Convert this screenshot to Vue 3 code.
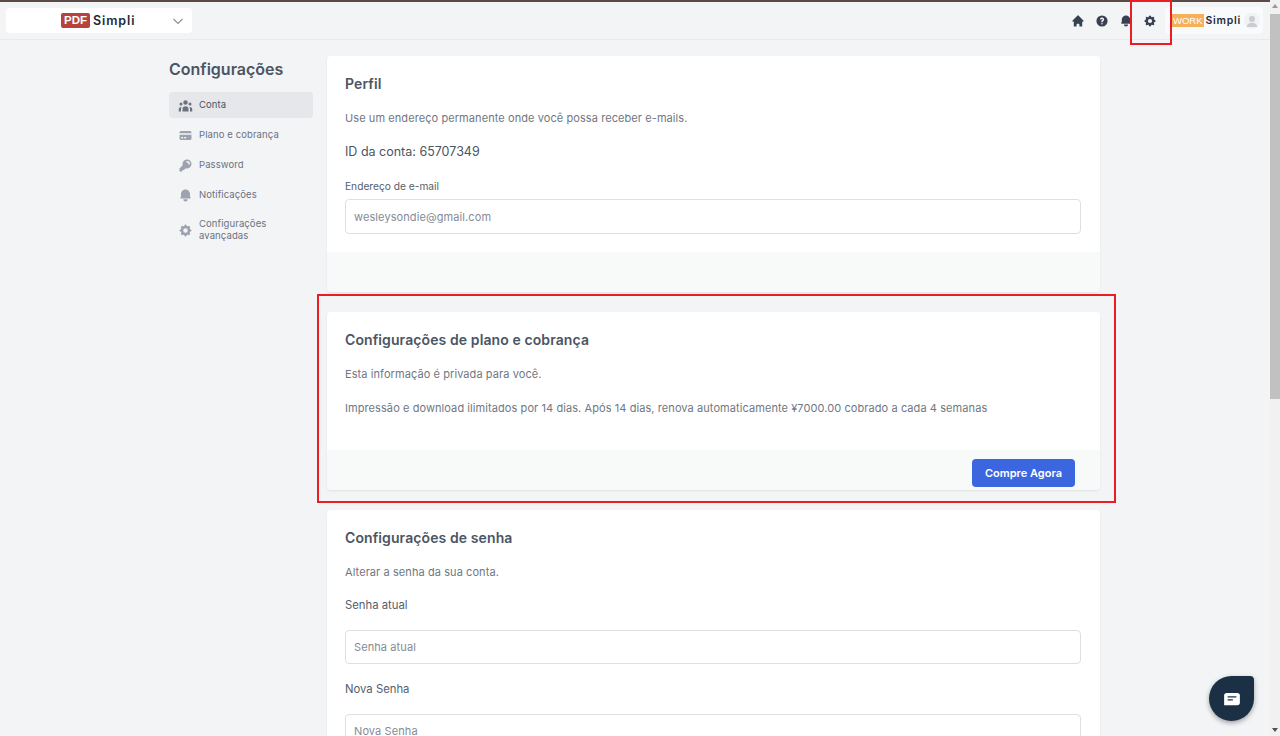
<template>
  <div class="page">
    <div class="view">
      <!-- Top bar -->
      <header class="topbar">
        <div class="app-switch">
          <span class="logo-pdf">PDF</span><span class="logo-name">Simpli</span>
          <svg class="chev" viewBox="0 0 12 12"><path d="M1.500 4l4.500 4.500L10.500 4" fill="none" stroke="#8a909b" stroke-width="1.100"/></svg>
        </div>
        <div class="top-icons">
          <svg class="ti" viewBox="0 0 20 20"><path :d="icons.home"/></svg>
          <svg class="ti" viewBox="0 0 20 20"><path fill-rule="evenodd" clip-rule="evenodd" :d="icons.help"/></svg>
          <svg class="ti" viewBox="0 0 20 20"><path :d="icons.bell"/></svg>
          <svg class="ti" viewBox="0 0 20 20"><path fill-rule="evenodd" clip-rule="evenodd" :d="icons.cog"/></svg>
        </div>
        <div class="user-chip">
          <span class="logo-work">WORK</span><span class="logo-name small">Simpli</span>
          <span class="avatar">
            <svg viewBox="0 0 16 16"><circle cx="8" cy="6" r="3" fill="#c9ccd1"/><path d="M2.500 14c.6-3 2.800-4.300 5.500-4.300s4.900 1.300 5.500 4.300z" fill="#c9ccd1"/></svg>
          </span>
        </div>
      </header>

      <div class="content">
        <!-- Side menu -->
        <aside class="side">
          <h2 class="side-title">Configurações</h2>
          <nav class="side-nav">
            <a v-for="item in menu" :key="item.label" class="side-item" :class="{ active: item.active }">
              <svg class="side-icon" viewBox="0 0 20 20"><path v-for="d in item.paths" :key="d" fill-rule="evenodd" clip-rule="evenodd" :d="d"/></svg>
              <span>{{ item.label }}</span>
            </a>
          </nav>
        </aside>

        <main class="cards">
          <section class="card">
            <div class="card-body perfil">
              <h3>Perfil</h3>
              <p class="muted">Use um endereço permanente onde você possa receber e-mails.</p>
              <p class="account">ID da conta: 65707349</p>
              <label class="field-label">Endereço de e-mail</label>
              <div class="input">wesleysondie@gmail.com</div>
            </div>
            <div class="card-foot"></div>
          </section>

          <section class="card">
            <div class="card-body plano">
              <h3>Configurações de plano e cobrança</h3>
              <p class="muted">Esta informação é privada para você.</p>
              <p class="muted plan-line">Impressão e download ilimitados por 14 dias. Após 14 dias, renova automaticamente ¥7000.00 cobrado a cada 4 semanas</p>
            </div>
            <div class="card-foot">
              <button class="btn-buy">Compre Agora</button>
            </div>
          </section>

          <section class="card">
            <div class="card-body senha">
              <h3>Configurações de senha</h3>
              <p class="muted">Alterar a senha da sua conta.</p>
              <label class="field-label first">Senha atual</label>
              <div class="input">Senha atual</div>
              <label class="field-label second">Nova Senha</label>
              <div class="input">Nova Senha</div>
            </div>
          </section>
        </main>
      </div>
    </div>

    <!-- Scrollbar -->
    <div class="scrollbar">
      <span class="arrow up"></span>
      <span class="thumb"></span>
      <span class="arrow down"></span>
    </div>

    <!-- Annotation boxes and chat bubble sit on top of the page -->
    <div class="mark mark-gear"></div>
    <div class="mark mark-plan"></div>
    <div class="chat">
      <svg viewBox="0 0 20 16"><path d="M4 1h12a3 3 0 0 1 3 3v8a3 3 0 0 1-3 3H1V4a3 3 0 0 1 3-3z" fill="#fff"/><path d="M5 5.500h10M5 9h6" stroke="#1f3247" stroke-width="1.400"/></svg>
    </div>
  </div>
</template>

<script setup>
const icons = {
  home: 'M10.707 2.293a1 1 0 00-1.414 0l-7 7a1 1 0 001.414 1.414L4 10.414V17a1 1 0 001 1h2a1 1 0 001-1v-2a1 1 0 011-1h2a1 1 0 011 1v2a1 1 0 001 1h2a1 1 0 001-1v-6.586l.293.293a1 1 0 001.414-1.414l-7-7z',
  help: 'M18 10a8 8 0 11-16 0 8 8 0 0116 0zm-8-3a1 1 0 00-.867.5 1 1 0 11-1.731-1A3 3 0 0113 8a3.001 3.001 0 01-2 2.830V11a1 1 0 11-2 0v-1a1 1 0 011-1 1 1 0 100-2zm0 8a1 1 0 100-2 1 1 0 000 2z',
  bell: 'M10 2a6 6 0 00-6 6v3.586l-.707.707A1 1 0 004 14h12a1 1 0 00.707-1.707L16 11.586V8a6 6 0 00-6-6zM10 18a3 3 0 01-3-3h6a3 3 0 01-3 3z',
  cog: 'M11.490 3.170c-.38-1.560-2.600-1.560-2.980 0a1.532 1.532 0 01-2.286.948c-1.372-.836-2.942.734-2.106 2.106.54.886.061 2.042-.947 2.287-1.561.379-1.561 2.600 0 2.978a1.532 1.532 0 01.947 2.287c-.836 1.372.734 2.942 2.106 2.106a1.532 1.532 0 012.287.947c.379 1.561 2.600 1.561 2.978 0a1.533 1.533 0 012.287-.947c1.372.836 2.942-.734 2.106-2.106a1.533 1.533 0 01.947-2.287c1.561-.379 1.561-2.600 0-2.978a1.532 1.532 0 01-.947-2.287c.836-1.372-.734-2.942-2.106-2.106a1.532 1.532 0 01-2.287-.947zM10 13a3 3 0 100-6 3 3 0 000 6z',
}

const menu = [
  {
    label: 'Conta',
    active: true,
    paths: ['M13 6a3 3 0 11-6 0 3 3 0 016 0zM18 8a2 2 0 11-4 0 2 2 0 014 0zM14 15a4 4 0 00-8 0v3h8v-3zM6 8a2 2 0 11-4 0 2 2 0 014 0zM16 18v-3a5.972 5.972 0 00-.75-2.906A3.005 3.005 0 0119 15v3h-3zM4.750 12.094A5.973 5.973 0 004 15v3H1v-3a3 3 0 013.750-2.906z'],
  },
  {
    label: 'Plano e cobrança',
    paths: ['M4 4a2 2 0 00-2 2v1h16V6a2 2 0 00-2-2H4z', 'M18 9H2v5a2 2 0 002 2h12a2 2 0 002-2V9zM4 13a1 1 0 011-1h1a1 1 0 110 2H5a1 1 0 01-1-1zm5-1a1 1 0 100 2h1a1 1 0 100-2H9z'],
  },
  {
    label: 'Password',
    paths: ['M18 8a6 6 0 01-7.743 5.743L10 14l-1 1-1 1H6v2H2v-4l4.257-4.257A6 6 0 1118 8zm-6-4a1 1 0 100 2 2 2 0 012 2 1 1 0 102 0 4 4 0 00-4-4z'],
  },
  {
    label: 'Notificações',
    paths: [icons.bell],
  },
  {
    label: 'Configurações avançadas',
    paths: [icons.cog],
  },
]
</script>

<style>
html, body { margin: 0; overflow: hidden; }
</style>

<style scoped>
.page {
  position: relative;
  display: flex;
  height: 736px;
  overflow: hidden;
  background: #f3f4f6;
  font-family: Inter, "Liberation Sans", sans-serif;
  color: #4b5563;
}
.view { flex: 1; min-width: 0; }

/* Top bar */
.topbar {
  height: 37px;
  border-top: 2px solid #5b4a45;
  border-bottom: 1px solid #e9eaec;
  display: flex;
  align-items: center;
  padding-left: 6px;
  padding-right: 7px;
}
.app-switch {
  width: 186px;
  height: 25px;
  background: #fff;
  border-radius: 4px;
  display: flex;
  align-items: center;
  box-sizing: border-box;
  padding-left: 55px;
  padding-right: 8px;
}
.logo-pdf {
  background: #b8423c;
  color: #fff;
  font: 700 11.500px "Liberation Sans", sans-serif;
  line-height: 15px;
  padding: 0 3px;
  border-radius: 2px;
  margin-right: 3px;
}
.logo-name { font-weight: 600; font-size: 12.500px; color: #1f2937; letter-spacing: 0.9px; }
.logo-name.small { font-size: 10.500px; letter-spacing: 0.7px; }
.chev { width: 12px; height: 12px; margin-left: auto; }
.top-icons { margin-left: auto; display: flex; align-items: center; gap: 10px; margin-right: 8px; }
.ti { width: 14px; height: 14px; display: block; fill: #374151; }
.user-chip {
  width: 98px;
  height: 27px;
  box-sizing: border-box;
  background: #f9fafb;
  border-radius: 4px;
  display: flex;
  align-items: center;
  padding-left: 7px;
}
.logo-work {
  background: #f7b05a;
  color: #fff;
  font: 400 9.500px "Liberation Sans", sans-serif;
  line-height: 13px;
  padding: 0 1px;
  margin-right: 2px;
}
.avatar {
  width: 16px;
  height: 16px;
  border-radius: 50%;
  background: #f1f2f4;
  margin-left: auto;
  margin-right: 3px;
  overflow: hidden;
}
.avatar svg { display: block; width: 16px; height: 16px; }

/* Content */
.content {
  display: flex;
  gap: 14px;
  padding: 16px 0 0 169px;
}
.side { width: 144px; flex-shrink: 0; }
.side-title {
  margin: 4px 0 14px;
  font-size: 16px;
  line-height: 18px;
  font-weight: 600;
  color: #4b5563;
}
.side-nav { display: flex; flex-direction: column; gap: 4px; }
.side-item {
  min-height: 26px;
  border-radius: 4px;
  display: flex;
  align-items: center;
  gap: 6px;
  padding: 0 9px;
  font-size: 9.500px;
  line-height: 12px;
  letter-spacing: 0.1px;
  color: #6b7280;
}
.side-item.active { background: #e5e7eb; color: #4b5563; }
.side-icon { width: 15px; height: 15px; flex-shrink: 0; fill: #9ca3af; }
.side-item.active .side-icon { fill: #6b7280; }
.side-item:last-child { margin-top: 5px; padding-right: 30px; }

.cards { width: 773px; display: flex; flex-direction: column; gap: 20px; }
.card {
  background: #fff;
  border-radius: 4px;
  box-shadow: 0 1px 2px rgba(0, 0, 0, 0.08);
  overflow: hidden;
}
.card-body { padding: 19px 19px 0 18px; }
.card h3 { margin: 0; font-size: 14px; line-height: 17px; font-weight: 600; letter-spacing: 0.1px; color: #4b5563; }
.muted { margin: 0; font-size: 11px; line-height: 14px; letter-spacing: 0.08px; color: #707784; }
.perfil { height: 196px; box-sizing: border-box; }
.perfil .muted { margin-top: 19px; }
.account { margin: 19px 0 0; font-size: 12.500px; line-height: 16px; color: #4b5563; }
.field-label { display: block; font-size: 11.300px; line-height: 14px; color: #555e6c; }
.perfil .field-label { margin-top: 19px; font-size: 10.200px; }
.input {
  margin-top: 6px;
  height: 35px;
  box-sizing: border-box;
  border: 1px solid #dcdfe4;
  border-radius: 4px;
  padding: 0 8px;
  display: flex;
  align-items: center;
  font-size: 11px;
  letter-spacing: 0.1px;
  color: #858b95;
  background: #fff;
}
.card-foot {
  height: 40px;
  box-sizing: border-box;
  background: #f8f9f9;
  display: flex;
  align-items: flex-start;
  justify-content: flex-end;
  padding: 9px 25px 0 0;
}
.plano { height: 138px; box-sizing: border-box; }
.plano .muted { margin-top: 19px; }
.plano .plan-line { margin-top: 20px; }
.btn-buy {
  width: 103px;
  height: 28px;
  border: none;
  border-radius: 4px;
  background: #3b66e0;
  color: #fff;
  font: 600 11px Inter, sans-serif;
}
.senha { height: 300px; box-sizing: border-box; }
.senha .muted { margin-top: 19px; }
.field-label.first { margin-top: 19px; }
.field-label.second { margin-top: 18px; }
.senha .input { margin-top: 18px; height: 34px; }

/* Scrollbar */
.scrollbar {
  width: 10px;
  background: #f1f1f1;
  display: flex;
  flex-direction: column;
  align-items: center;
}
.arrow { width: 0; height: 0; border-left: 3px solid transparent; border-right: 3px solid transparent; margin: 4px 0; flex-shrink: 0; }
.arrow.up { border-bottom: 4px solid #9a9a9a; }
.arrow.down { border-top: 4px solid #505050; margin-top: auto; }
.thumb { width: 100%; height: 385px; margin-top: 2px; background: #c1c1c1; }

/* Overlays */
.mark { position: absolute; border: 2px solid #ed1c24; box-sizing: border-box; }
.mark-gear { left: 1130px; top: 0; width: 42px; height: 45px; }
.mark-plan { left: 317px; top: 294px; width: 799px; height: 209px; }
.chat {
  position: absolute;
  left: 1209px;
  top: 676px;
  width: 45px;
  height: 45px;
  background: #1c3045;
  border-radius: 50% 4px 50% 50%;
  box-shadow: 0 2px 5px rgba(0, 0, 0, 0.35);
  display: flex;
  align-items: center;
  justify-content: center;
}
.chat svg { width: 18px; height: 14px; }
</style>
